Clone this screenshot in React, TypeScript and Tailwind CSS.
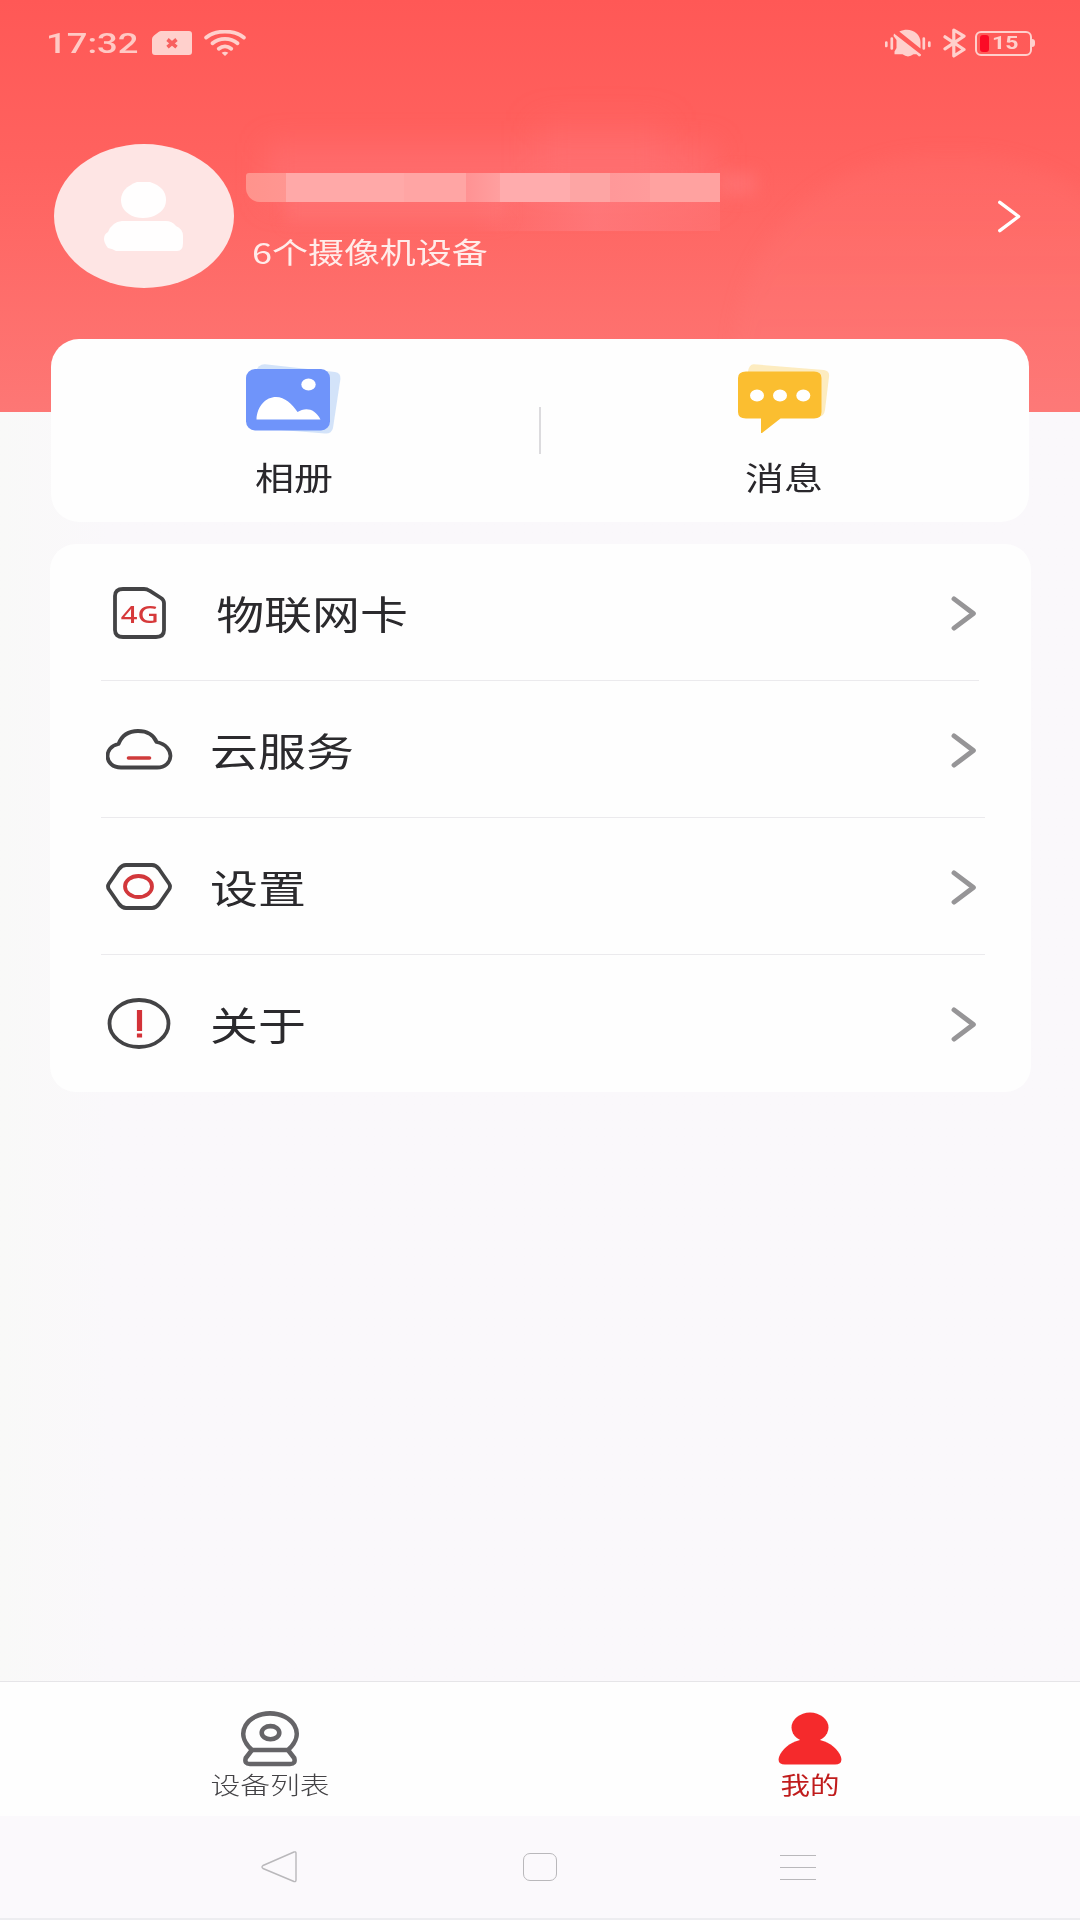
import type { ReactNode } from "react";

function Chevron({ className, width }: { className: string; width: number }) {
  return (
    <svg className={className} viewBox="0 0 24 34" fill="none" stroke="currentColor" strokeWidth={width} strokeLinecap="round" strokeLinejoin="round">
      <path d="M2.8 2.8 21.6 17 2.8 31.2" />
    </svg>
  );
}

function StatusBar() {
  return (
    <div className="flex h-[86px] items-center pl-[46px] pr-[45px] text-[#ffd0cc]">
      <span className="w-[106px] origin-left scale-x-[1.3] pt-[2px] font-[Roboto] text-[28px] leading-none font-medium whitespace-nowrap text-[#ffc9c4]">
        17:32
      </span>
      <svg className="h-[24px] w-[40px]" viewBox="0 0 40 24" fill="currentColor">
        <path d="M9 0H37Q40 0 40 3V21Q40 24 37 24H3Q0 24 0 21V8Q0 6 2 4.500L6.500 1Q8 0 9 0Z" />
        <path d="m15.500 8.500 9 7.600m0-7.600-9 7.600" stroke="#f8605f" strokeWidth="3.600" />
      </svg>
      <svg className="ml-[12px] h-[26px] w-[42px]" viewBox="0 0 42 26" fill="none" stroke="currentColor">
        <g strokeWidth="3.900" strokeLinecap="round">
          <path d="M2.200 7.500C12-.3 30-.3 39.800 7.500" />
          <path d="M8.500 13.200C15.500 7.400 26.500 7.400 33.500 13.200" />
          <path d="M14.800 18.800C18.500 15.600 23.500 15.600 27.200 18.800" />
        </g>
        <path d="M17.600 22.800Q21 20.800 24.400 22.800L21 25.900Z" fill="currentColor" stroke="none" />
      </svg>
      <svg className="ml-auto h-[28px] w-[46px]" viewBox="0 0 46 28" fill="currentColor">
        <path d="M14.300 2.600C24-2.500 36 3 35.500 14V19.500Z" />
        <path d="M9 4.500 36 25.400Q36.500 27.500 34 27.500L31.500 25.300H28.500Q23 29.500 17.500 25.300H9.500V22.500L11.500 19V11L8.500 7Z" />
        <path d="M1.300 13.500V17M6.800 9.500V19.500M38.800 9.500V19.500M44.300 13.500V17" stroke="currentColor" strokeWidth="2.700" strokeLinecap="round" />
      </svg>
      <svg className="ml-[12px] h-[30px] w-[24px]" viewBox="0 0 24 30" fill="none" stroke="currentColor" strokeWidth="3.200" strokeLinejoin="round" strokeLinecap="round">
        <path d="M2 8.800 21 21.500 10.800 28V2L21 8.200 2 20.800" />
      </svg>
      <div className="ml-[8px] flex h-[25px] w-[57px] items-center rounded-[6px] border-[2.5px] border-current pl-[3px]">
        <span className="h-[17px] w-[9px] rounded-[3px] bg-[#fb0b26]" />
        <span className="ml-[3px] origin-left scale-x-[1.28] font-[Roboto] text-[18px] leading-none font-bold">15</span>
      </div>
      <span className="h-[8px] w-[3px] rounded-r-full bg-current" />
    </div>
  );
}

function MaskedName() {
  return (
    <div className="relative h-[29px] w-[474px]">
      <div className="absolute -top-[30px] left-[20px] h-[60px] w-[450px] bg-[#ff7a80]/35 blur-[14px]" />
      <div className="absolute -top-[52px] left-[290px] h-[60px] w-[130px] bg-[#ff7a80]/25 blur-[16px]" />
      <div className="absolute top-0 left-[474px] h-[22px] w-[36px] bg-[#ff8186]/40 blur-[8px]" />
      <div className="absolute top-[29px] left-[225px] h-[29px] w-[249px] bg-linear-to-r from-[#ff7f84]/0 via-[#ff8085]/60 to-[#ff7677]/50" />
      <div className="absolute top-[20px] left-[40px] h-[30px] w-[220px] bg-[#ff8085]/30 blur-[8px]" />
      <div className="relative flex h-full overflow-hidden rounded-tl-[3px] rounded-bl-[14px]">
        <span className="w-[40px] bg-linear-to-r from-[#ff938c] to-[#ff9691]" />
        <span className="w-[118px] bg-[#ffa9a8]" />
        <span className="w-[62px] bg-[#ffa5a4]" />
        <span className="w-[34px] bg-linear-to-r from-[#ff9293] to-[#ff9f9f]" />
        <span className="w-[70px] bg-[#ffacad]" />
        <span className="w-[40px] bg-[#fda5a4]" />
        <span className="w-[40px] bg-linear-to-r from-[#ff9899] to-[#ff9b9b]" />
        <span className="flex-1 bg-[#ffa2a0]" />
      </div>
    </div>
  );
}

function Header() {
  return (
    <header className="relative h-[412px] overflow-hidden bg-linear-to-b from-[#ff5856] via-[#ff625f] via-40% to-[#fd7775]">
      <div className="absolute top-[154px] left-[735px] h-[400px] w-[430px] rounded-full bg-linear-to-b from-[#ff7f7c]/15 to-[#ff8587]/20 blur-[9px]" />
      <div className="relative">
        <StatusBar />
        <div className="flex h-[260px] items-center pr-[59px] pl-[54px]">
          <div className="flex h-[144px] w-[180px] items-center justify-center rounded-[50%] bg-[#fee5e4]">
            <svg className="mr-[2px] h-[69px] w-[79px]" viewBox="0 0 79 69" fill="#fffefe">
              <path d="M33 0H46Q62 5 62 18Q62 30 47 35Q39 37 31 35Q17 30 17 18Q17 6 33 0Z" />
              <path d="M18 39H62Q68 39 72 44Q79 47 79 54V61Q79 69 73 69H12Q9 67 4 66Q0 61 0 57Q0 52 4 50Q8 40 18 39Z" />
            </svg>
          </div>
          <div className="ml-[12px] flex flex-col pt-[13px]">
            <MaskedName />
            <p className="mt-[27px] ml-[6px] origin-left scale-x-[1.24] self-start text-[29px] leading-[44px] whitespace-nowrap text-[#ffecea]">
              6个摄像机设备
            </p>
          </div>
          <Chevron className="ml-auto h-[35px] w-[24px] text-white" width={3.4} />
        </div>
      </div>
    </header>
  );
}

function AlbumIcon() {
  return (
    <svg className="relative -left-[2px] h-[70px] w-[95px]" viewBox="0 0 95 70">
      <path d="M19 .3 89 8Q95 9 94.400 15L87 64Q85.500 70 79 69.500L10 64V8Q12 0 19 .3Z" fill="#d3e3f9" />
      <rect y="5" width="84" height="61.500" rx="9" fill="#6f94fa" />
      <ellipse cx="62.500" cy="20.500" rx="7.200" ry="6" fill="#fff" />
      <path d="M10.500 55.500C11 42 20 33 30 33C39 33 46 40 51.500 48C59 43 69 44 74.500 55.500Z" fill="#fff" />
    </svg>
  );
}

function MessageIcon() {
  return (
    <svg className="relative -left-px h-[70px] w-[92px]" viewBox="0 0 92 70">
      <path d="M16 .3 86 6Q92 7 91 13L87 46Q86 53 80 53L10 50V8Q11 0 16 .3Z" fill="#fdecc0" />
      <path d="M8 7.500H76Q83.500 7.500 83.500 14V48Q83.500 54.500 76 54.500H42.500L24 69H23V54.500H8Q0 54.500 0 48V14Q0 7.500 8 7.500Z" fill="#fbbe30" />
      <g fill="#fff">
        <ellipse cx="19" cy="31.500" rx="7" ry="6" />
        <ellipse cx="42" cy="31.500" rx="7" ry="6" />
        <ellipse cx="65.300" cy="31.500" rx="7" ry="6" />
      </g>
    </svg>
  );
}

function Shortcut({ icon, label }: { icon: ReactNode; label: string }) {
  return (
    <div className="flex flex-1 flex-col items-center pt-[25px]">
      {icon}
      <span className="mt-[18px] mr-px scale-x-[1.22] text-[32px] leading-[48px] text-[#29272b]">{label}</span>
    </div>
  );
}

function SimIcon() {
  return (
    <div className="relative mt-[2px] flex h-[52px] w-[53px] items-center justify-center">
      <svg className="absolute inset-0 h-full w-full" viewBox="0 0 53 52" fill="none" stroke="#434345" strokeWidth="3.800" strokeLinejoin="round">
        <path d="M10 2H31Q34 2 36.500 3.700L48 11Q51 13 51 16V43Q51 50 43 50H10Q2 50 2 43V9Q2 2 10 2Z" />
      </svg>
      <span className="relative scale-x-[1.22] pt-px pl-px font-['Noto_Sans'] text-[24px] leading-none font-medium text-[#d6393a]">4G</span>
    </div>
  );
}

function CloudIcon() {
  return (
    <svg className="h-[41px] w-[67px]" viewBox="0 0 67 41" fill="none" strokeLinecap="round">
      <path d="M15 38.500C-2 38.500-3 18 12.500 15C16 6 23 2 32 2C41 2 48 6 50.500 13C70 17 68 38.500 51 38.500Z" stroke="#434345" strokeWidth="3.800" strokeLinejoin="round" />
      <path d="M22.500 29H43.500" stroke="#cf3b3b" strokeWidth="3.600" />
    </svg>
  );
}

function HexIcon() {
  return (
    <svg className="mr-px h-[47px] w-[66px]" viewBox="0 0 66 47" fill="none" strokeWidth="3.800">
      <path d="M20 2H46Q50 2 53 6L63 20.500Q65 23.500 63 26.500L53 41Q50 45 46 45H20Q16 45 13 41L3 26.500Q1 23.500 3 20.500L13 6Q16 2 20 2Z" stroke="#434345" />
      <ellipse cx="32.500" cy="23.500" rx="13.500" ry="10.500" stroke="#d2373b" strokeWidth="3.800" />
    </svg>
  );
}

function AboutIcon() {
  return (
    <svg className="mr-px h-[51px] w-[64px]" viewBox="0 0 64 51" fill="none">
      <ellipse cx="32" cy="25.500" rx="29.500" ry="23.500" stroke="#434345" strokeWidth="3.800" />
      <path d="M32.500 12V33M32.500 35.500V39.500" stroke="#d33238" strokeWidth="5.200" />
    </svg>
  );
}

const menu = [
  { label: "物联网卡", icon: <SimIcon />, gap: "pl-[5px]", line: "mr-[52px]" },
  { label: "云服务", icon: <CloudIcon />, gap: "", line: "mr-[46px]" },
  { label: "设置", icon: <HexIcon />, gap: "", line: "mr-[46px]" },
  { label: "关于", icon: <AboutIcon />, gap: "", line: "" },
];

function Menu() {
  return (
    <section className="mt-[22px] ml-[50px] w-[981px] rounded-[26px] bg-[#fefefe] pb-px">
      {menu.map((item, i) => (
        <div key={item.label}>
          <div className="flex h-[136px] items-center pr-[55px] pl-[51px]">
            <div className="flex w-[77px] justify-center">{item.icon}</div>
            <div className="w-[32px]" />
            <span className={`${item.gap} origin-left scale-x-[1.23] text-[39px] leading-[58px] whitespace-nowrap text-[#2b2a2d]`}>
              {item.label}
            </span>
            <Chevron className="mt-[3px] ml-auto h-[35px] w-[25px] text-[#969597]" width={4.8} />
          </div>
          {i < 3 && <div className={`ml-[51px] h-px bg-[#ebeaed] ${item.line}`} />}
        </div>
      ))}
    </section>
  );
}

function CameraIcon() {
  return (
    <svg className="h-[56px] w-[58px]" viewBox="0 0 58 56" fill="none" stroke="#656467" strokeWidth="4.600" strokeLinejoin="round">
      <path d="M11 39C-8 22 7 2.400 29 2.400S66 22 47 39Z" />
      <path d="M11 39 4.800 47Q3 53 9 53H49Q55 53 53.200 47L47 39" />
      <ellipse cx="29.500" cy="21.700" rx="8.800" ry="6.600" />
    </svg>
  );
}

function PersonIcon() {
  return (
    <svg className="h-[56px] w-[64px]" viewBox="0 0 64 56" fill="#f52a2c">
      <ellipse cx="32" cy="16.500" rx="18.500" ry="15" />
      <path d="M22 29H42C53 32 60 38 63 46Q65 53.500 57 53.500H7Q-1 53.500 1 46C4 38 11 32 22 29Z" />
    </svg>
  );
}

function TabBar() {
  return (
    <nav className="flex h-[135px] border-t border-[#e6e5e8] bg-[#fefefe]">
      <div className="flex flex-1 flex-col items-center pt-[29px]">
        <CameraIcon />
        <span className="-mt-px scale-x-[1.24] text-[24px] leading-[36px] font-light text-[#434245]">设备列表</span>
      </div>
      <div className="flex flex-1 flex-col items-center pt-[29px]">
        <PersonIcon />
        <span className="-mt-px scale-x-[1.23] text-[24px] leading-[36px] text-[#c01c1c]">我的</span>
      </div>
    </nav>
  );
}

function SystemNav() {
  return (
    <div className="flex h-[104px] items-center border-b-2 border-[#ededf0] bg-[#fbf9fc] pl-[261px] text-[#b9b8bb]">
      <svg className="h-[32px] w-[36px]" viewBox="0 0 36 32" fill="none" stroke="currentColor" strokeWidth="1.400" strokeLinejoin="round">
        <path d="M33 1Q35 .5 35 2V29Q35 31 33 30.500L2 17.500Q0 16 2 14.500Z" />
      </svg>
      <span className="ml-[226px] h-[28px] w-[34px] rounded-[7px] border border-current" />
      <span className="ml-[223px] flex w-[36px] flex-col gap-[11px]">
        <span className="h-px bg-current" />
        <span className="h-px bg-current" />
        <span className="h-px bg-current" />
      </span>
    </div>
  );
}

export default function App() {
  return (
    <div className="flex h-[1920px] w-[1080px] flex-col overflow-hidden bg-linear-to-r from-[#f9f9f8] to-[#faf8fb] to-10% font-['Noto_Sans_CJK_SC',sans-serif]">
      <Header />
      <section className="relative -mt-[73px] ml-[51px] flex h-[183px] w-[978px] items-start rounded-[28px] bg-[#fefefe]">
        <Shortcut icon={<AlbumIcon />} label="相册" />
        <span className="mt-[68px] h-[47px] w-[2px] bg-[#dcdbde]" />
        <Shortcut icon={<MessageIcon />} label="消息" />
      </section>
      <Menu />
      <div className="flex-1" />
      <TabBar />
      <SystemNav />
    </div>
  );
}
